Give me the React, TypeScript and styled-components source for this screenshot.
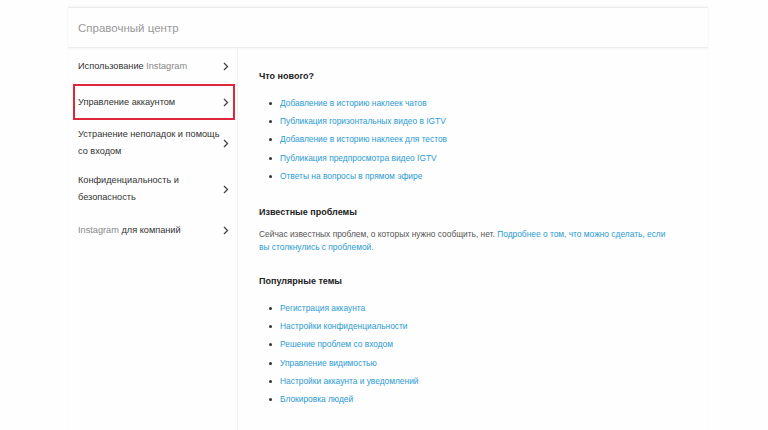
import React from "react";
import styled, { createGlobalStyle } from "styled-components";

const Global = createGlobalStyle`
  html, body { margin: 0; padding: 0; background: #fefefe; }
  body { font-family: "Liberation Sans", Arial, sans-serif; }
  ul { margin: 0; padding: 0; }
`;

const Page = styled.div`
  width: 768px;
  height: 430px;
  overflow: hidden;
  background: #fefefe;
  padding-top: 7px;
  box-sizing: border-box;
`;

const Frame = styled.div`
  margin-left: 68px;
  width: 640px;
  border-top: 1px solid #ebebeb;
  box-shadow: 0 -1px 2px rgba(0, 0, 0, 0.04);
  display: flex;
  flex-direction: column;
  height: 423px;
`;

const Header = styled.div`
  height: 40px;
  box-sizing: border-box;
  border-bottom: 1px solid #ececec;
  box-shadow: 0 1px 2px rgba(0, 0, 0, 0.03);
  display: flex;
  align-items: center;
  padding: 1px 0 0 10px;
  font-size: 11.5px;
  color: #999;
  flex-shrink: 0;
`;

const Body = styled.div`
  display: flex;
  flex: 1;
`;

const Sidebar = styled.nav`
  width: 169px;
  border-right: 1px solid #efefef;
  display: flex;
  flex-direction: column;
`;

const NavItem = styled.div<{ $active?: boolean }>`
  position: relative;
  min-height: 36px;
  padding: 6px 8px 6px 10px;
  box-sizing: border-box;
  display: flex;
  align-items: center;
  justify-content: space-between;
  font-size: 9.2px;
  line-height: 17px;
  color: #333;
  &::after {
    content: "";
    display: ${(p) => (p.$active ? "block" : "none")};
    position: absolute;
    left: 5px;
    right: 2px;
    top: 0;
    bottom: 0;
    border: 2px solid #e0263a;
  }
`;

const NavText = styled.span`
  max-width: 146px;
`;

const Brand = styled.span`
  color: #888;
`;

const Chevron = () => (
  <svg width="6" height="9" viewBox="0 0 6 9" style={{ flexShrink: 0 }}>
    <polyline points="1,1 4.5,4.5 1,8" fill="none" stroke="#444" strokeWidth="1.3" />
  </svg>
);

const Content = styled.main`
  flex: 1;
  padding: 21px 0 0 21px;
`;

const Section = styled.section`
  margin-bottom: 20px;
`;

const Heading = styled.h3`
  margin: 0;
  font-size: 9px;
  line-height: 14px;
  font-weight: bold;
  color: #222;
`;

const LinkList = styled.ul`
  list-style: none;
  margin-top: 11px;
`;

const LinkItem = styled.li`
  position: relative;
  padding-left: 21px;
  font-size: 8.4px;
  line-height: 18.2px;
  color: #2b9bd3;
  &::before {
    content: "";
    position: absolute;
    left: 10px;
    top: 8px;
    width: 3px;
    height: 3px;
    border-radius: 50%;
    background: #333;
  }
`;

const Para = styled.p`
  margin: 9px 0 0 0;
  font-size: 8.4px;
  line-height: 13px;
  color: #555;
  width: 410px;
`;

const A = styled.span`
  color: #2b9bd3;
`;

const whatsNew = [
  "Добавление в историю наклеек чатов",
  "Публикация горизонтальных видео в IGTV",
  "Добавление в историю наклеек для тестов",
  "Публикация предпросмотра видео IGTV",
  "Ответы на вопросы в прямом эфире",
];

const popular = [
  "Регистрация аккаунта",
  "Настройки конфиденциальности",
  "Решение проблем со входом",
  "Управление видимостью",
  "Настройки аккаунта и уведомлений",
  "Блокировка людей",
];

export default function App() {
  return (
    <Page>
      <Global />
      <Frame>
        <Header>Справочный центр</Header>
        <Body>
          <Sidebar>
            <NavItem>
              <NavText>
                Использование <Brand>Instagram</Brand>
              </NavText>
              <Chevron />
            </NavItem>
            <NavItem $active>
              <NavText>Управление аккаунтом</NavText>
              <Chevron />
            </NavItem>
            <NavItem>
              <NavText>Устранение неполадок и помощь со входом</NavText>
              <Chevron />
            </NavItem>
            <NavItem>
              <NavText>Конфиденциальность и безопасность</NavText>
              <Chevron />
            </NavItem>
            <NavItem>
              <NavText>
                <Brand>Instagram</Brand> для компаний
              </NavText>
              <Chevron />
            </NavItem>
          </Sidebar>
          <Content>
            <Section>
              <Heading>Что нового?</Heading>
              <LinkList>
                {whatsNew.map((t) => (
                  <LinkItem key={t}>{t}</LinkItem>
                ))}
              </LinkList>
            </Section>
            <Section>
              <Heading>Известные проблемы</Heading>
              <Para>
                Сейчас известных проблем, о которых нужно сообщить, нет.{" "}
                <A>Подробнее о том, что можно сделать, если вы столкнулись с проблемой.</A>
              </Para>
            </Section>
            <Section>
              <Heading>Популярные темы</Heading>
              <LinkList>
                {popular.map((t) => (
                  <LinkItem key={t}>{t}</LinkItem>
                ))}
              </LinkList>
            </Section>
          </Content>
        </Body>
      </Frame>
    </Page>
  );
}
